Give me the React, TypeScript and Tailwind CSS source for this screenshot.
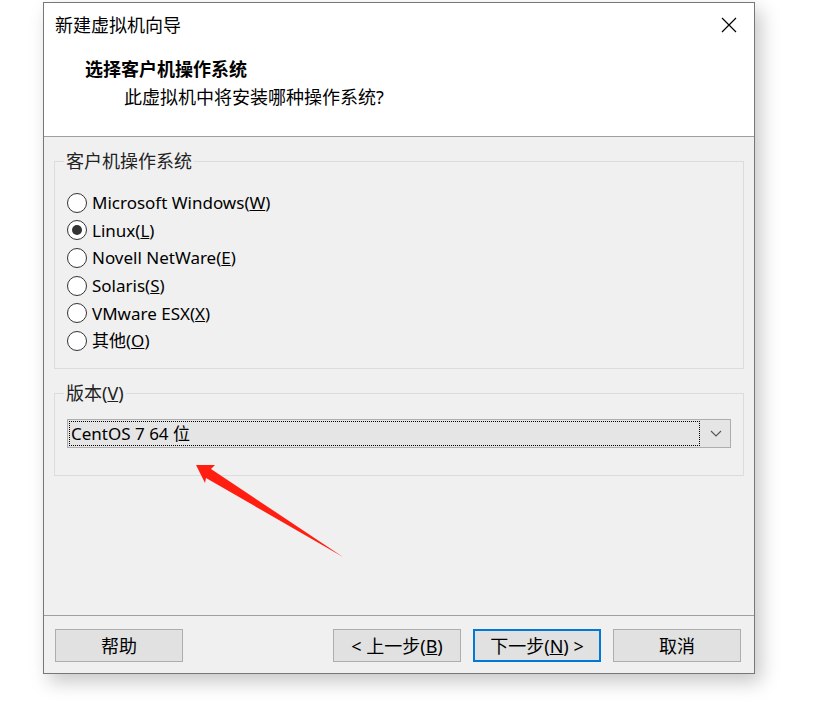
import React from 'react';

const OS_LIST = [
  { label: 'Microsoft Windows', key: 'W' },
  { label: 'Linux', key: 'L' },
  { label: 'Novell NetWare', key: 'E' },
  { label: 'Solaris', key: 'S' },
  { label: 'VMware ESX', key: 'X' },
  { label: '其他', key: 'O' },
];

const FONT = 'font-["Noto_Sans","Noto_Sans_CJK_SC",sans-serif]';

const Radio = ({ checked }: { checked: boolean }) => (
  <span className="w-[20px] h-[20px] rounded-full border border-[#333] bg-white flex items-center justify-center shrink-0">
    {checked && <span className="w-[10px] h-[10px] rounded-full bg-[#333]" />}
  </span>
);

const Button = ({ children, focused }: { children: React.ReactNode; focused?: boolean }) => (
  <button
    className={`w-[128px] h-[33px] flex items-center justify-center text-[18px] leading-none text-black bg-[#e1e1e1] ${
      focused ? 'border-2 border-[#0078d7]' : 'border border-[#adadad]'
    }`}
  >
    {children}
  </button>
);

export default function App() {
  const selected = 'L';

  return (
    <div className={`relative w-[834px] h-[712px] bg-white ${FONT}`}>
      {/* Window */}
      <div className="ml-[43px] pt-[2px] w-[712px]">
        <div className="w-[712px] h-[672px] border border-[#777] bg-[#f0f0f0] flex flex-col shadow-[6px_8px_18px_rgba(0,0,0,0.22)]">
          {/* Header */}
          <div className="h-[134px] bg-white border-b border-[#a0a0a0] flex flex-col">
            <div className="h-[44px] flex items-center justify-between pl-[11px] pr-[17px]">
              <span className="text-[18px] text-black leading-none">新建虚拟机向导</span>
              <svg width="16" height="16" viewBox="0 0 16 16" className="text-black">
                <path d="M1 1 L15 15 M15 1 L1 15" stroke="currentColor" strokeWidth="1.2" fill="none" />
              </svg>
            </div>
            <div className="pl-[41px] mt-[13px] text-[18px] font-bold leading-none text-black">选择客户机操作系统</div>
            <div className="pl-[80px] mt-[10px] text-[18px] leading-none text-black">此虚拟机中将安装哪种操作系统?</div>
          </div>

          {/* Content */}
          <div className="flex-1 px-[10px] pt-[12px] border-b border-[#a0a0a0]">
            <fieldset className="border border-[#dcdcdc] h-[220px] px-[12px]">
              <legend className="ml-[-3px] px-[2px] text-[18px] leading-[24px] text-[#222]">客户机操作系统</legend>
              <div className="pt-[16px] flex flex-col">
                {OS_LIST.map((os) => (
                  <div key={os.key} className="h-[27.6px] flex items-center gap-[5px]">
                    <Radio checked={os.key === selected} />
                    <span className="text-[17px] leading-none text-black whitespace-nowrap">
                      {os.label}(<u>{os.key}</u>)
                    </span>
                  </div>
                ))}
              </div>
            </fieldset>

            <fieldset className="mt-[12px] border border-[#dcdcdc] h-[95px] px-[12px]">
              <legend className="ml-[-3px] px-[2px] text-[18px] leading-[24px] text-[#222]">
                版本(<u>V</u>)
              </legend>
              <div className="mt-[14px] h-[29px] border border-[#adadad] bg-[#e5e5e5] flex items-center pl-[1px] pr-[8px]">
                <div className="flex-1 h-[25px] border border-dotted border-black flex items-center pl-[1px] text-[17px] text-black">
                  CentOS 7 64 位
                </div>
                <svg width="12" height="8" viewBox="0 0 12 8" className="ml-[10px] text-[#555]">
                  <path d="M1 1 L6 6 L11 1" stroke="currentColor" strokeWidth="1.1" fill="none" />
                </svg>
              </div>
            </fieldset>
          </div>

          {/* Footer */}
          <div className="h-[57px] pl-[11px] pr-[13px] pt-[13px] flex items-start">
            <Button>帮助</Button>
            <div className="flex-1" />
            <div className="flex gap-[12px]">
              <Button>
                &lt; 上一步(<u>B</u>)
              </Button>
              <Button focused>
                下一步(<u>N</u>) &gt;
              </Button>
              <Button>取消</Button>
            </div>
          </div>
        </div>
      </div>

      {/* Red annotation arrow */}
      <svg className="absolute left-0 top-0 pointer-events-none" width="834" height="712" viewBox="0 0 834 712">
        <polygon points="196,465 215,465 211,469 343,557 206,478 205,483" fill="#ff1e10" />
      </svg>
    </div>
  );
}
